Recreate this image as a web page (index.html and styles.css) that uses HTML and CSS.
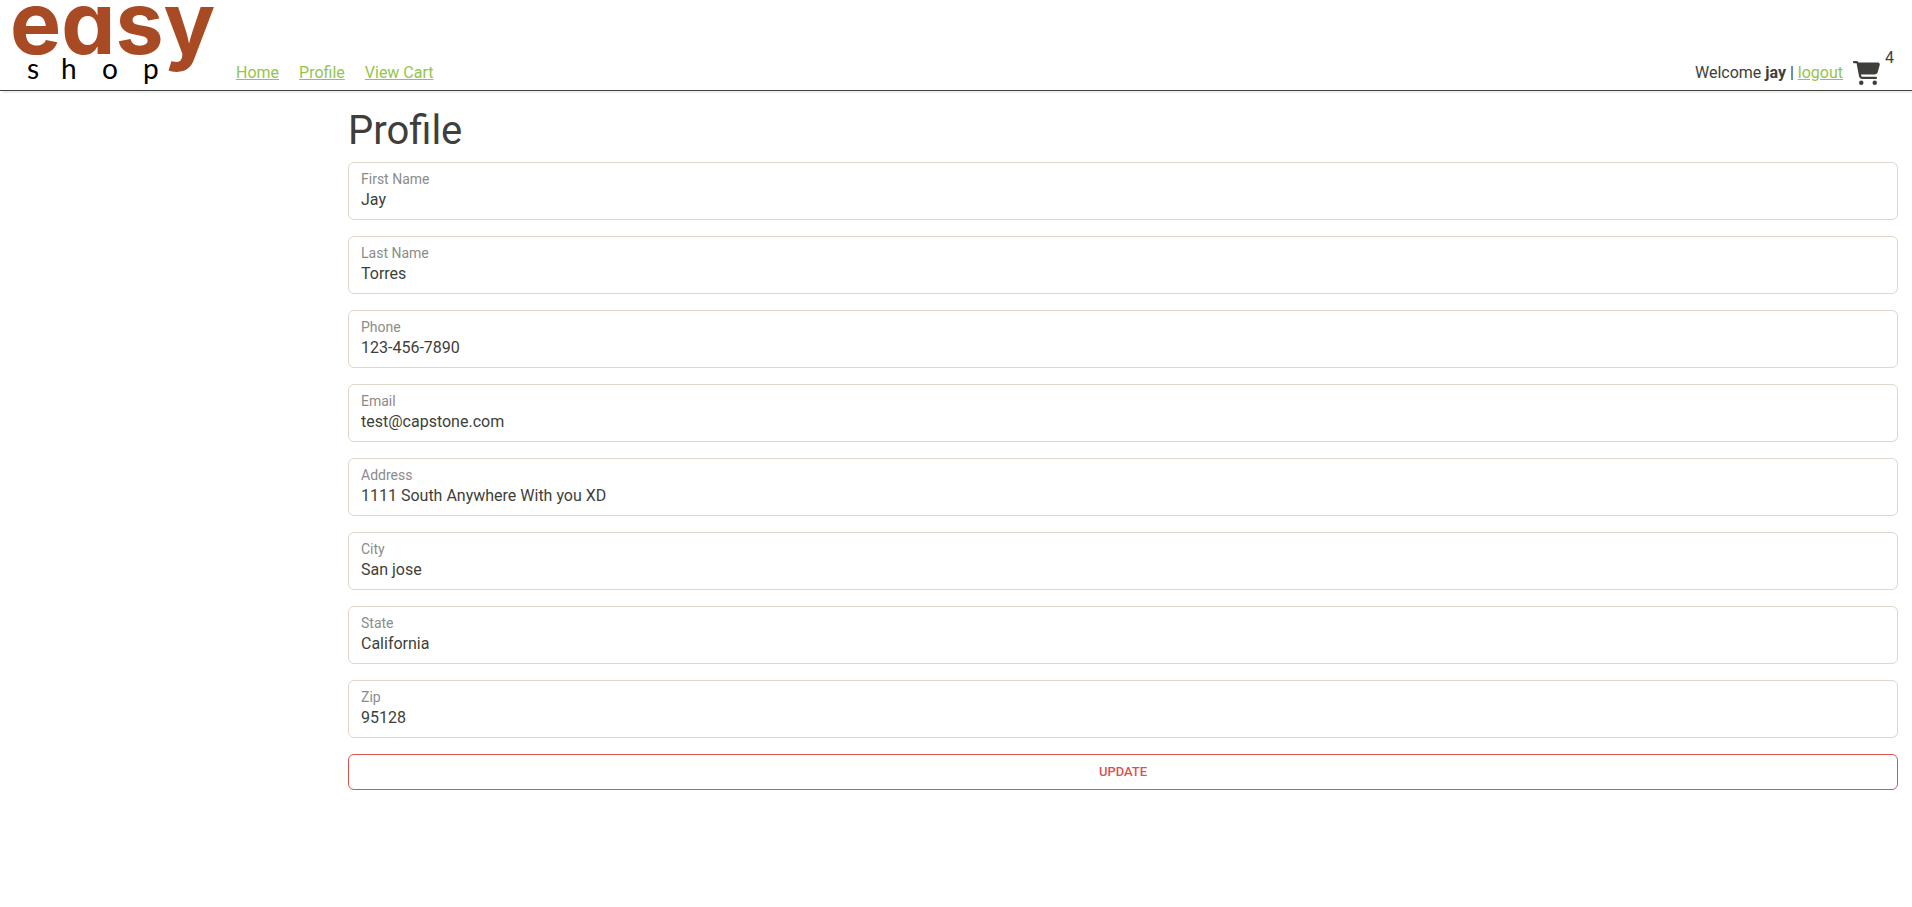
FILE: index.html
```html
<!DOCTYPE html>
<html lang="en">
<head>
  <meta charset="utf-8">
  <meta name="viewport" content="width=device-width, initial-scale=1">
  <title>easy shop</title>
  <link rel="stylesheet" href="styles.css">
</head>
<body>
  <header class="site-header">
    <svg class="logo" viewBox="0 0 216 90" role="img" aria-label="easy shop">
      <text class="logo-easy" x="10" y="54">easy</text>
      <text class="logo-shop" x="27 61 102 143" y="79">shop</text>
    </svg>
    <nav class="main-nav">
      <a href="#">Home</a>
      <a href="#">Profile</a>
      <a href="#">View Cart</a>
    </nav>
    <div class="user">
      <p class="welcome">Welcome <strong>jay</strong> | <a href="#">logout</a></p>
      <div class="cart">
        <svg class="cart-icon" viewBox="0 0 576 512" aria-hidden="true">
          <path d="M24 0C10.700 0 0 10.700 0 24S10.700 48 24 48H69.500C73.300 48 76.600 50.700 77.300 54.500L128.900 325.500C135.400 359.500 165.100 384 199.700 384H488C501.300 384 512 373.300 512 360S501.300 336 488 336H199.700C188.100 336 178.200 327.800 176 316.500L170.700 288H459.200C492 288 520.600 265.800 529.200 234.200L570.300 82.400C577.300 57.100 558.100 32 531.800 32H120.100C111 12.800 91.600 0 69.500 0Z"/>
          <circle cx="176" cy="464" r="48"/>
          <circle cx="464" cy="464" r="48"/>
        </svg>
        <span class="cart-count">4</span>
      </div>
    </div>
  </header>
  <div class="layout">
    <main class="content">
      <h1>Profile</h1>
      <form class="profile-form">
        <div class="field"><label for="first">First Name</label><input id="first" type="text" value="Jay"></div>
        <div class="field"><label for="last">Last Name</label><input id="last" type="text" value="Torres"></div>
        <div class="field"><label for="phone">Phone</label><input id="phone" type="text" value="123-456-7890"></div>
        <div class="field"><label for="email">Email</label><input id="email" type="text" value="test@capstone.com"></div>
        <div class="field"><label for="address">Address</label><input id="address" type="text" value="1111 South Anywhere With you XD"></div>
        <div class="field"><label for="city">City</label><input id="city" type="text" value="San jose"></div>
        <div class="field"><label for="state">State</label><input id="state" type="text" value="California"></div>
        <div class="field"><label for="zip">Zip</label><input id="zip" type="text" value="95128"></div>
        <button class="update" type="button">Update</button>
      </form>
    </main>
  </div>
</body>
</html>
```
FILE: styles.css
```css
* {
  box-sizing: border-box;
}

body {
  margin: 0;
  background: #fff;
  color: #3e3f3a;
  font: 16px/24px Roboto, sans-serif;
}

a {
  color: #93c54b;
}

.site-header {
  display: flex;
  align-items: flex-end;
  padding-right: 18px;
  border-bottom: 1px solid #3e3f3a;
  box-shadow: 3px 2px 0 #eee;
}

.logo {
  display: block;
  width: 216px;
  height: 90px;
  flex: none;
  overflow: visible;
}

.logo-easy {
  fill: #a84b24;
  font: 700 86px Inter, sans-serif;
  font-feature-settings: "cv11";
}

.logo-shop {
  fill: #000;
  font: 400 28px Lato, sans-serif;
}

.main-nav {
  display: flex;
  gap: 20px;
  margin: 0 auto 0 20px;
  padding-bottom: 5px;
}

.user {
  display: flex;
  align-items: flex-end;
  gap: 10px;
  padding-bottom: 5px;
}

.welcome {
  margin: 0;
}

.cart {
  display: flex;
  align-items: flex-start;
  gap: 5px;
}

.cart-icon {
  width: 27px;
  height: 24px;
  margin-top: 15px;
  fill: #3e3f3a;
}

.layout {
  padding: 16px 14px 16px 348px;
}

h1 {
  margin: 0 0 7px;
  font-size: 40px;
  line-height: 48px;
  font-weight: 400;
}

.profile-form {
  display: flex;
  flex-direction: column;
  gap: 16px;
}

.field {
  display: flex;
  flex-direction: column;
  gap: 1px;
  padding: 8px 12px 7px;
  border: 1px solid #dfd7ca;
  border-radius: 6px;
}

.field label {
  color: #8b8c89;
  font-size: 14px;
  line-height: 16px;
}

.field input {
  width: 100%;
  height: 24px;
  padding: 0;
  border: 0;
  outline: 0;
  background: none;
  color: #3e3f3a;
  font: inherit;
}

.update {
  padding: 8px 12px;
  border: 1px solid #d9534f;
  border-radius: 6px;
  background: none;
  color: #d9534f;
  font: 500 13px/18px Roboto, sans-serif;
  text-transform: uppercase;
}
```
